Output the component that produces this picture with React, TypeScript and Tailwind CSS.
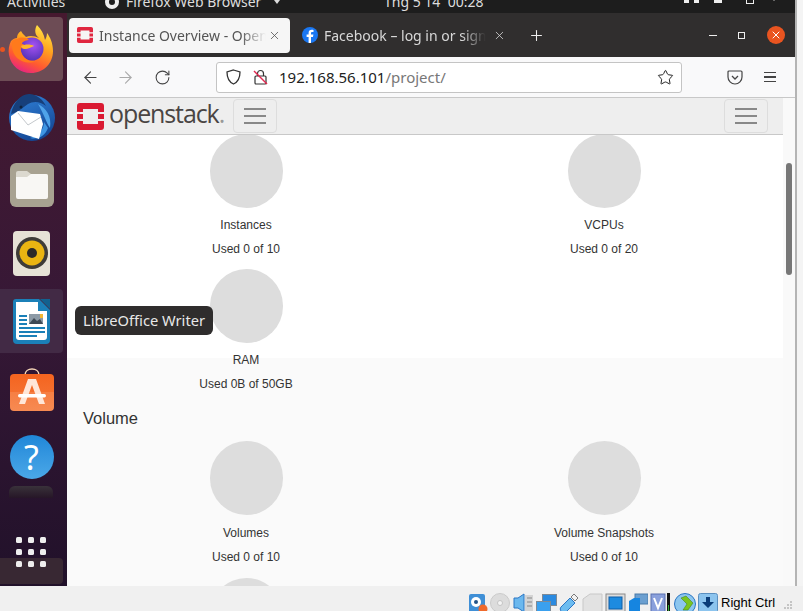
import React from "react";
import { ArrowLeft, ArrowRight, Plus, RotateCw, Star, X } from "lucide-react";

const ui = "font-['Noto_Sans','Open_Sans',sans-serif]";

//------------------------------------------------------------
function FirefoxIcon() {
    return (
        <svg width="46" height="48" viewBox="0 0 46 48" className="mr-[2px]">
            <defs>
                <linearGradient id="ffBody" x1="0.8" y1="0" x2="0.35" y2="1">
                    <stop offset="0" stopColor="#ffe847" />
                    <stop offset="0.4" stopColor="#ffa51f" />
                    <stop offset="0.75" stopColor="#ff5a30" />
                    <stop offset="1" stopColor="#e9257f" />
                </linearGradient>
                <radialGradient id="ffGlobe" cx="0.55" cy="0.35" r="0.75">
                    <stop offset="0" stopColor="#a552f2" />
                    <stop offset="1" stopColor="#4b2fb0" />
                </radialGradient>
            </defs>
            <path
                d="M29 0C26 5 27 10 31 13C27 11 22 10 18 12C15 9 14 8 13 6C10 8 9 10 9 13C7 13 5 14 3 16C1 20 0 25 1 30C3 41 12 48 23 48C36 48 45 38 45 26C45 18 42 12 39 8C39 11 38 13 37 15C36 9 33 4 29 0Z"
                fill="url(#ffBody)"
            />
            <circle cx="24" cy="24" r="11.5" fill="url(#ffGlobe)" />
            <path
                d="M4 16C3 24 6 33 14 36C19 38 24 38 28 36C22 37 17 34 14.5 30C13 27 12.5 25 13 23C15 24 18 24 21 22C18 21 15 19 13 18C16 16 19 15 21 15C18 12 13 12 9 14C7 14 5 15 4 16Z"
                fill="#ff7a1c"
            />
            <path d="M13 21C17 19 23 19 26 21C23 22 20 24 17 24C15 24 14 23 13 21Z" fill="#ffb52e" />
        </svg>
    );
}

function ThunderbirdIcon() {
    return (
        <svg width="48" height="50" viewBox="0 0 48 50">
            <defs>
                <linearGradient id="tbBlue" x1="0.3" y1="0" x2="0.7" y2="1">
                    <stop offset="0" stopColor="#2f7fd6" />
                    <stop offset="1" stopColor="#12428f" />
                </linearGradient>
            </defs>
            <circle cx="24" cy="26" r="23" fill="url(#tbBlue)" />
            <path d="M3 22C5 10 14 1 22 2C30 3 35 8 38 14C32 9 25 9 20 12L9 20Z" fill="#173f7a" />
            <path d="M30 12C38 16 44 24 42 36C38 30 36 22 30 12Z" fill="#4fa3ea" />
            <path d="M22 46C30 44 36 38 36 30L40 36C37 44 30 48 22 46Z" fill="#3f95e2" />
            <path d="M3 24L10 19L32 22L35 32L31 47L3 38Z" fill="#ffffff" />
            <path d="M10 21L20 33L33 25" fill="none" stroke="#c4c8cc" strokeWidth="1" />
            <circle cx="13" cy="15" r="1.5" fill="#10243f" />
        </svg>
    );
}

function FilesIcon() {
    return (
        <div className="flex h-[44px] w-[44px] items-center justify-center rounded-[6px] bg-[#a8a291]">
            <svg width="32" height="29" viewBox="0 0 32 29">
                <path d="M2 0H11L15 3H30A2 2 0 0 1 32 5V10H0V2A2 2 0 0 1 2 0Z" fill="#dcd9cf" />
                <path d="M0 6H11L15 3H30A2 2 0 0 1 32 5V26A2 2 0 0 1 30 28H2A2 2 0 0 1 0 26Z" fill="#f8f7f4" />
            </svg>
        </div>
    );
}

function SpeakerIcon() {
    return (
        <div className="flex h-[45px] w-[37px] items-center justify-center rounded-[4px] bg-[#e6e2d6]">
            <svg width="32" height="32" viewBox="0 0 32 32">
                <circle cx="16" cy="16" r="16" fill="#3e3c38" />
                <circle cx="16" cy="16" r="12.5" fill="#eab512" />
                <circle cx="16" cy="16" r="5" fill="#2b2a28" />
            </svg>
        </div>
    );
}

function WriterIcon() {
    return (
        <svg width="37" height="45" viewBox="0 0 37 45">
            <path d="M3 0H26L37 11V41A4 4 0 0 1 33 45H4A4 4 0 0 1 0 41V3A3 3 0 0 1 3 0Z" fill="#1b80b8" />
            <path d="M3 3H25V12H34V38A3 3 0 0 1 31 41H6A3 3 0 0 1 3 38Z" fill="#ffffff" />
            <path d="M27 0L37 10V0Z" fill="#12618f" />
            <rect x="6" y="16" width="8" height="2" fill="#1b80b8" />
            <rect x="6" y="20" width="8" height="2" fill="#1b80b8" />
            <rect x="6" y="24" width="8" height="2" fill="#1b80b8" />
            <rect x="16" y="15" width="14" height="10" fill="#8c9aa6" />
            <path d="M16 25L21 19L24 22L27 20L30 25Z" fill="#3f4a55" />
            <rect x="27" y="15" width="3" height="4" fill="#f2b632" />
            <rect x="6" y="28" width="26" height="2" fill="#1b80b8" />
            <rect x="6" y="32" width="26" height="2" fill="#1b80b8" />
            <rect x="6" y="36" width="18" height="2" fill="#1b80b8" />
        </svg>
    );
}

function SoftwareIcon() {
    return (
        <svg width="44" height="43" viewBox="0 0 44 43">
            <defs>
                <linearGradient id="swBag" x1="0" y1="0" x2="0" y2="1">
                    <stop offset="0" stopColor="#f4641f" />
                    <stop offset="0.5" stopColor="#f56f2e" />
                    <stop offset="0.5" stopColor="#f67f44" />
                    <stop offset="1" stopColor="#f78a52" />
                </linearGradient>
            </defs>
            <path d="M15 7C15 -1 29 -1 29 7" fill="none" stroke="#f7d7b8" strokeWidth="1.5" />
            <rect x="0" y="6" width="44" height="37" rx="4" fill="url(#swBag)" />
            <path d="M9 36L18 11H26L35 36H29L22 17L15 36Z" fill="#ffe6d8" />
            <rect x="8" y="26" width="28" height="3.5" rx="1.7" fill="#ffffff" />
        </svg>
    );
}

function OpenstackMark({ size, fill }: { size: number; fill: string }) {
    return (
        <svg width={size} height={size} viewBox="0 0 27 27" className="block shrink-0">
            <path
                d="M3 0H24A3 3 0 0 1 27 3V9H21V6H6V9H0V3A3 3 0 0 1 3 0ZM0 11H6V16H0ZM21 11H27V16H21ZM0 18H6V21H21V18H27V24A3 3 0 0 1 24 27H3A3 3 0 0 1 0 24Z"
                fill={fill}
            />
        </svg>
    );
}

function FacebookFavicon() {
    return (
        <svg width="16" height="16" viewBox="0 0 16 16" className="shrink-0">
            <circle cx="8" cy="8" r="8" fill="#1a77f2" />
            <path d="M9 16V10H11L11.4 7.6H9V6.2C9 5.4 9.4 5 10.2 5H11.5V3C11 2.9 10.4 2.8 9.8 2.8C7.8 2.8 6.6 4 6.6 6V7.6H4.6V10H6.6V16Z" fill="#ffffff" />
        </svg>
    );
}

function Hamburger() {
    return (
        <div className="flex h-[34px] w-[44px] flex-col items-center justify-center gap-[5px] rounded-[4px] border border-[#dddddd]">
            <span className="h-[2px] w-[22px] bg-[#888888]" />
            <span className="h-[2px] w-[22px] bg-[#888888]" />
            <span className="h-[2px] w-[22px] bg-[#888888]" />
        </div>
    );
}

function QuotaChart({ label, used, low }: { label: string; used: string; low?: boolean }) {
    return (
        <div className="flex h-[135px] flex-col items-center text-center text-[12px] leading-[24px] text-[#333333]">
            <div className={`ml-px h-[74px] w-[73px] shrink-0 rounded-full bg-[#dddddd] ${low ? "mb-[6px]" : "mb-[5px]"}`} />
            <div>{label}</div>
            <div>{used}</div>
        </div>
    );
}

//------------------------------------------------------------
function VBoxIcons() {
    return (
        <div className="flex items-start gap-[2px]">
            {/* hard disk */}
            <svg width="20" height="20" viewBox="0 0 20 20">
                <rect x="1" y="1" width="16" height="19" rx="2" fill="#3f8fd6" />
                <circle cx="8" cy="9" r="5" fill="#ffffff" />
                <circle cx="8" cy="9" r="2" fill="#23548a" />
                <circle cx="15" cy="16" r="4.5" fill="#ef6a2c" />
            </svg>
            {/* optical */}
            <svg width="21" height="20" viewBox="0 0 21 20">
                <circle cx="10" cy="10" r="9.5" fill="#dcdcdc" stroke="#cacaca" />
                <circle cx="10" cy="10" r="2.5" fill="#f4f4f4" stroke="#c4c4c4" />
            </svg>
            {/* audio */}
            <svg width="21" height="20" viewBox="0 0 21 20">
                <path d="M1 5H5L11 1V19L5 15H1Z" fill="#6bb8ee" stroke="#2b76c4" />
                <rect x="12" y="2" width="8" height="16" fill="#d4d4d4" />
                <path d="M14 5H19M14 9H19M14 13H19" stroke="#888888" />
            </svg>
            {/* network */}
            <svg width="21" height="20" viewBox="0 0 21 20">
                <rect x="6.5" y="1.5" width="14" height="11" fill="#2a8ae0" stroke="#7d8a96" />
                <rect x="0.5" y="8.5" width="14" height="11" fill="#3aa0ee" stroke="#7d8a96" />
            </svg>
            {/* usb */}
            <svg width="21" height="20" viewBox="0 0 21 20">
                <path d="M2 14L11 5L16 10L7 19C5 20 3 20 2 18C1 17 1 15 2 14Z" fill="#6cbcf0" stroke="#2b76c4" />
                <path d="M12 4L15 1L19 5L16 8Z" fill="#f2f2f2" stroke="#7a7a7a" />
            </svg>
            {/* shared folders */}
            <svg width="21" height="20" viewBox="0 0 21 20">
                <path d="M1 6L8 1H20V20H1Z" fill="#e2e2e2" stroke="#c8c8c8" />
            </svg>
            {/* display */}
            <svg width="21" height="20" viewBox="0 0 21 20">
                <rect x="1" y="1" width="19" height="19" fill="#dddddd" stroke="#8a8a8a" />
                <rect x="4" y="4" width="13" height="12" fill="#1d8be0" stroke="#0f5ea8" />
            </svg>
            {/* video capture */}
            <svg width="20" height="20" viewBox="0 0 20 20">
                <rect x="7" y="1" width="13" height="10" fill="#6b9fd0" stroke="#4a7aa8" />
                <path d="M1 8L6 5H12V20H1Z" fill="#1685e0" />
            </svg>
            {/* vt-x chip */}
            <svg width="16" height="20" viewBox="0 0 16 20">
                <rect x="1" y="1" width="14" height="19" fill="#8aa0dc" stroke="#5a70b0" />
                <path d="M4 5L8 15L12 5" fill="none" stroke="#ffffff" strokeWidth="2" />
            </svg>
            <svg width="3" height="20" viewBox="0 0 3 20" className="-ml-px">
                <rect x="0" y="0" width="3" height="20" fill="#111111" />
                <rect x="1" y="12" width="1" height="8" fill="#32b032" />
            </svg>
            {/* guest additions */}
            <svg width="22" height="20" viewBox="0 0 22 20" className="ml-[2px]">
                <circle cx="11" cy="11" r="10.5" fill="#8cc6ee" stroke="#2b76c4" />
                <path d="M7 5L12 3L19 10L14 17L9 17L13 11Z" fill="#7ac520" stroke="#3f7a10" strokeWidth="0.5" />
            </svg>
            {/* host key */}
            <svg width="20" height="20" viewBox="0 0 20 20">
                <rect x="0.5" y="0.5" width="19" height="19" rx="2" fill="#8cc4ee" stroke="#5a8fc0" />
                <path d="M10 15L4 9H8V4H12V9H16Z" fill="#0a3c78" />
            </svg>
        </div>
    );
}

//------------------------------------------------------------
export default function App() {
    return (
        <div className="flex h-[611px] w-[803px] flex-col overflow-hidden bg-[#f0f0f0]">
            <div className="flex h-[586px]">
                <div className="relative flex w-[795px] flex-col">
                    {/* GNOME TOP BAR */}
                    <div className={`h-[13px] shrink-0 overflow-hidden bg-[#1d1d1d] text-[14px] text-[#dddddd] ${ui}`}>
                        <div className="-mt-[8px] flex h-[20px] items-center leading-[20px]">
                            <span className="ml-[7px] w-[98px]">Activities</span>
                            <span className="mr-[7px] h-[14px] w-[14px] rounded-full border-[4px] border-[#eeeeee]" />
                            <span className="w-[148px]">Firefox Web Browser</span>
                            <span className="h-0 w-0 border-x-[3px] border-t-[4px] border-x-transparent border-t-[#dddddd]" />
                            <span className="ml-[104px] w-[300px]">Thg 5 14&nbsp; 00:28</span>
                            <span className="-mt-[6px] h-[8px] w-[5px] bg-[#eeeeee]" />
                            <span className="-mt-[6px] ml-[5px] h-[8px] w-[5px] bg-[#eeeeee]" />
                            <span className="-mt-[6px] ml-[15px] h-[8px] w-[8px] bg-[#eeeeee]" />
                            <span className="-mt-[6px] ml-[24px] h-[10px] w-[8px] border border-[#eeeeee]" />
                            <span className="-mt-[6px] ml-[17px] h-0 w-0 border-x-[3px] border-t-[4px] border-x-transparent border-t-[#dddddd]" />
                        </div>
                    </div>

                    <div className="flex min-h-0 flex-1">
                        {/* DOCK */}
                        <div className="relative flex w-[67px] shrink-0 flex-col overflow-hidden bg-gradient-to-b from-[#46192f] via-[#371836] to-[#21112a] pt-[4px]">
                            <div className="relative mb-[4px] flex h-[64px] w-[63px] items-center justify-center rounded-r-[4px] bg-[#6d4c55]">
                                <span className="absolute left-[0px] top-[30px] h-[5px] w-[5px] rounded-full bg-[#e95420]" />
                                <FirefoxIcon />
                            </div>
                            <div className="mb-[4px] flex h-[64px] w-[63px] items-center justify-center">
                                <ThunderbirdIcon />
                            </div>
                            <div className="mb-[4px] flex h-[64px] w-[63px] items-center justify-center">
                                <FilesIcon />
                            </div>
                            <div className="mb-[4px] flex h-[64px] w-[63px] items-center justify-center">
                                <SpeakerIcon />
                            </div>
                            <div className="mb-[4px] flex h-[64px] w-[63px] items-center justify-center rounded-r-[4px] bg-[#422a45]">
                                <WriterIcon />
                            </div>
                            <div className="mb-[4px] flex h-[64px] w-[63px] items-center justify-center">
                                <SoftwareIcon />
                            </div>
                            <div className="mb-[4px] flex h-[64px] w-[63px] items-center justify-center">
                                <div className={`flex h-[44px] w-[44px] items-center justify-center rounded-full bg-gradient-to-b from-[#1f87d8] to-[#4aa8e8] text-[34px] leading-none text-white ${ui}`}>
                                    ?
                                </div>
                            </div>
                            {/* clipped terminal tile above the app grid */}
                            <div className="mx-[9px] mt-[-7px] h-[12px] w-[44px] rounded-t-[6px] bg-gradient-to-b from-[#39323a] to-[#261627]" />

                            <div className="absolute bottom-[2px] left-0 h-[26px] w-[63px] rounded-r-[4px] bg-[#382833]" />
                            <div className="absolute left-[16px] top-[524px] grid grid-cols-3 gap-[6px]">
                                {Array.from({ length: 9 }).map((_, i) => (
                                    <span key={i} className="h-[6px] w-[6px] rounded-[1.5px] bg-[#eeeeee]" />
                                ))}
                            </div>
                        </div>

                        {/* FIREFOX WINDOW */}
                        <div className="flex min-w-0 flex-1 flex-col">
                            <div className={`flex h-[44px] shrink-0 items-center bg-[#302e2e] pl-[2px] text-[14px] ${ui}`}>
                                <div className="flex h-[35px] w-[221px] items-center rounded-[4px] bg-[#f6f6f6] pl-[8px] pr-[9px] text-[#555555]">
                                    <OpenstackMark size={16} fill="#e0263f" />
                                    <span className="ml-[6px] w-[167px] overflow-hidden whitespace-nowrap [mask-image:linear-gradient(to_right,black_85%,transparent)]">Instance Overview - Openstack</span>
                                    <X size={13} strokeWidth={1.5} className="ml-auto text-[#555555]" />
                                </div>
                                <div className="ml-[12px] flex h-[35px] w-[204px] items-center text-[#d8d8d8]">
                                    <FacebookFavicon />
                                    <span className="ml-[6px] w-[163px] overflow-hidden whitespace-nowrap [mask-image:linear-gradient(to_right,black_85%,transparent)]">Facebook – log in or sign up</span>
                                    <X size={13} strokeWidth={1.5} className="ml-[7px] text-[#d8d8d8]" />
                                </div>
                                <Plus size={17} strokeWidth={1.5} className="ml-[22px] text-[#eeeeee]" />
                                <span className="ml-[164px] h-[1px] w-[8px] bg-[#eeeeee]" />
                                <span className="ml-[21px] h-[7px] w-[7px] border border-[#eeeeee]" />
                                <span className="ml-[22px] flex h-[18px] w-[18px] items-center justify-center rounded-full bg-[#e95420]">
                                    <X size={12} strokeWidth={2} className="text-white" />
                                </span>
                            </div>

                            {/* NAV BAR */}
                            <div className={`flex h-[41px] shrink-0 items-center border-b border-[#c8c8c8] bg-[#f9f9fa] ${ui}`}>
                                <ArrowLeft size={19} strokeWidth={1.4} className="ml-[14px] text-[#444444]" />
                                <ArrowRight size={19} strokeWidth={1.4} className="ml-[16px] text-[#aaaaaa]" />
                                <RotateCw size={17} strokeWidth={1.5} className="ml-[19px] text-[#444444]" />
                                <div className="ml-[45px] flex h-[31px] w-[466px] items-center rounded-[3px] border border-[#c4c4c4] bg-white">
                                    <svg width="15" height="16" viewBox="0 0 15 16" className="ml-[9px]">
                                        <path d="M7.5 1L14 3C14 9 12 13 7.5 15C3 13 1 9 1 3Z" fill="none" stroke="#333333" strokeWidth="1.3" />
                                    </svg>
                                    <svg width="15" height="16" viewBox="0 0 15 16" className="ml-[12px]">
                                        <rect x="2" y="7" width="11" height="8" rx="1" fill="none" stroke="#333333" strokeWidth="1.2" />
                                        <path d="M4.5 7V4.5A3 3 0 0 1 10.5 4.5V7" fill="none" stroke="#333333" strokeWidth="1.2" />
                                        <path d="M1 2L14 15" stroke="#e22850" strokeWidth="1.5" />
                                    </svg>
                                    <span className="ml-[11px] text-[15px] text-[#222222]">192.168.56.101<span className="text-[#777777]">/project/</span></span>
                                    <Star size={17} strokeWidth={1.4} className="ml-auto mr-[7px] text-[#222222]" />
                                </div>
                                <svg width="16" height="15" viewBox="0 0 16 15" className="ml-[45px]">
                                    <path d="M2 1H14A1 1 0 0 1 15 2V7A7 7 0 0 1 1 7V2A1 1 0 0 1 2 1Z" fill="none" stroke="#444444" strokeWidth="1.2" />
                                    <path d="M5 6L8 9L11 6" fill="none" stroke="#444444" strokeWidth="1.3" />
                                </svg>
                                <div className="ml-[21px] flex w-[12px] flex-col gap-[3px]">
                                    <span className="h-[1.5px] bg-[#444444]" />
                                    <span className="h-[1.5px] bg-[#444444]" />
                                    <span className="h-[1.5px] bg-[#444444]" />
                                </div>
                            </div>

                            {/* PAGE */}
                            <div className="flex min-h-0 flex-1 bg-[#f9f9f9]">
                                <div className="flex w-[716px] shrink-0 flex-col overflow-hidden bg-[#fafafa] font-['Liberation_Sans',sans-serif]">
                                    <div className="relative z-10 flex h-[37px] shrink-0 items-center border-b border-[#c8c8c8] bg-[#eeeeee] pl-[10px]">
                                        <OpenstackMark size={27} fill="#da1a32" />
                                        <span className="mb-[5px] ml-[5px] w-[124px] font-['Open_Sans',sans-serif] text-[25px] font-medium leading-none tracking-[-1.1px] text-[#4a4543]">
                                            openstack<span className="text-[#999999]">.</span>
                                        </span>
                                        <Hamburger />
                                        <div className="ml-auto mr-[15px]"><Hamburger /></div>
                                    </div>

                                    <div className="-mt-px h-[224px] shrink-0 bg-white">
                                        <div className="grid grid-cols-2">
                                            <QuotaChart label="Instances" used="Used 0 of 10" />
                                            <QuotaChart label="VCPUs" used="Used 0 of 20" />
                                            <QuotaChart label="RAM" used="Used 0B of 50GB" />
                                        </div>
                                    </div>

                                    <div className="pl-[16px] pt-[48px] text-[16.5px] leading-[24px] text-[#333333]">Volume</div>
                                    <div className="mt-[11px] grid grid-cols-2 gap-y-[2px]">
                                        <QuotaChart label="Volumes" used="Used 0 of 10" low />
                                        <QuotaChart label="Volume Snapshots" used="Used 0 of 10" low />
                                        <QuotaChart label="" used="" />
                                    </div>
                                </div>

                                <div className="flex-1 pl-[3px] pt-[65px]">
                                    <div className="h-[112px] w-[6px] rounded-full bg-[#777777]" />
                                </div>
                            </div>
                        </div>
                    </div>

                    {/* DOCK TOOLTIP */}
                    <div className={`absolute left-[75px] top-[306px] flex h-[29px] w-[138px] items-center justify-center rounded-[6px] bg-[#2f2d2d] text-[14.7px] text-[#e8e8e8] ${ui}`}>
                        LibreOffice Writer
                    </div>
                </div>
                <div className="w-[8px] border-l-2 border-[#b4b4b4] bg-[#f4f4f4]" />
            </div>

            {/* VIRTUALBOX STATUS BAR */}
            <div className="flex h-[25px] shrink-0 items-start bg-[#f0f0f0] pl-[468px] pt-[7px]">
                <VBoxIcons />
                <span className="ml-[3px] mt-[2px] font-['Liberation_Sans',sans-serif] text-[13px] leading-[16px] text-black">Right Ctrl</span>
                <div className="ml-[9px] mt-[8px] grid grid-cols-3 gap-[1px]">
                    <span className="h-[2px] w-[2px]" />
                    <span className="h-[2px] w-[2px]" />
                    <span className="h-[2px] w-[2px] bg-[#c4c4c4]" />
                    <span className="h-[2px] w-[2px]" />
                    <span className="h-[2px] w-[2px] bg-[#c4c4c4]" />
                    <span className="h-[2px] w-[2px] bg-[#c4c4c4]" />
                    <span className="h-[2px] w-[2px] bg-[#c4c4c4]" />
                    <span className="h-[2px] w-[2px] bg-[#c4c4c4]" />
                    <span className="h-[2px] w-[2px] bg-[#c4c4c4]" />
                </div>
            </div>
        </div>
    );
}
